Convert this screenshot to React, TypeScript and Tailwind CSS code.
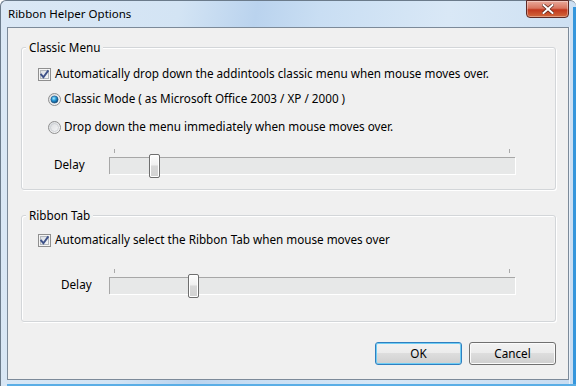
import React from "react";

function CheckBox() {
  return (
    <svg width="13" height="13" viewBox="0 0 13 13" className="shrink-0">
      <defs>
        <linearGradient id="cbg" x1="0" y1="0" x2="1" y2="1">
          <stop offset="0" stopColor="#d9dde2" />
          <stop offset="1" stopColor="#f7f8f9" />
        </linearGradient>
      </defs>
      <rect x="0.5" y="0.5" width="12" height="12" fill="#f5f5f5" stroke="#8f8f8f" />
      <rect x="2.5" y="2.5" width="8" height="8" fill="url(#cbg)" stroke="#b3b8bd" />
      <path d="M3.2 6.6 L5.4 9.2 L9.8 3.2" fill="none" stroke="#3e5289" strokeWidth="1.9" strokeLinecap="square" />
    </svg>
  );
}

function Radio({ checked }: { checked?: boolean }) {
  const id = checked ? "rsel" : "runsel";
  return (
    <svg width="13" height="13" viewBox="0 0 13 13" className="shrink-0">
      <defs>
        <linearGradient id={id + "o"} x1="0" y1="0" x2="1" y2="1">
          <stop offset="0" stopColor="#d6d9dc" />
          <stop offset="1" stopColor="#fbfbfb" />
        </linearGradient>
        <radialGradient id={id + "d"} cx="0.4" cy="0.35" r="0.7">
          <stop offset="0" stopColor="#a8ecff" />
          <stop offset="0.45" stopColor="#2596d6" />
          <stop offset="1" stopColor="#0c3f6a" />
        </radialGradient>
      </defs>
      <circle cx="6.5" cy="6.5" r="6" fill={`url(#${id}o)`} stroke="#8f8f8f" />
      {checked ? (
        <circle cx="6.5" cy="6.5" r="3.6" fill={`url(#${id}d)`} stroke="#1b4f80" strokeWidth="0.6" />
      ) : (
        <circle cx="6.5" cy="6.5" r="4" fill="none" stroke="#c9ccd0" strokeWidth="0.8" />
      )}
    </svg>
  );
}

function Slider({ label, labelPad, thumb }: { label: string; labelPad: string; thumb: number }) {
  return (
    <div className="flex h-[30px]">
      <div className={`w-[87px] shrink-0 flex items-center ${labelPad} pt-[4px]`}>{label}</div>
      <div className="flex flex-col w-[406px]">
        <div className="h-[9px] relative">
          <div className="absolute left-[5px] top-[1px] w-px h-[4px] bg-[#a9a9a9]" />
          <div className="absolute left-[400px] top-[1px] w-px h-[4px] bg-[#a9a9a9]" />
        </div>
        <div className="relative h-[17px] bg-[#e7e8e8] border-t border-l border-[#a7a7a7] shadow-[1px_1px_0_#ffffff]">
          <div
            className="absolute top-[-4px] w-[11px] h-[24px] rounded-[2px] border border-[#6e6e6e] bg-[linear-gradient(to_bottom,#fdfdfd_0%,#f0f0f0_45%,#d8d8d8_50%,#d2d2d2_100%)] shadow-[inset_0_0_0_1px_#ffffff]"
            style={{ left: thumb - 1 }}
          />
        </div>
      </div>
    </div>
  );
}

function Group({ title, children, className }: { title: string; children: React.ReactNode; className?: string }) {
  return (
    <div
      className={`ml-[13px] mr-[12px] border border-[#d3d6d9] rounded-[3px] shadow-[1px_1px_0_#ffffff,inset_1px_1px_0_#ffffff] ${className ?? ""}`}
    >
      <div className="-mt-[8px] ml-[4px] px-[3px] w-fit h-[15px] leading-[15px] bg-[#f0f0f0]">{title}</div>
      {children}
    </div>
  );
}

function Button({ children, def }: { children: React.ReactNode; def?: boolean }) {
  return (
    <div
      className={`w-[87px] h-[23px] rounded-[3px] border flex items-center justify-center bg-[linear-gradient(to_bottom,#f2f2f2_0%,#ebebeb_50%,#dddddd_50%,#cfcfcf_100%)] ${
        def
          ? "border-[#2f7fc0] shadow-[inset_0_0_0_1px_#6fcdf4]"
          : "border-[#707070] shadow-[inset_0_0_0_1px_#fbfbfb]"
      }`}
    >
      {children}
    </div>
  );
}

export default function App() {
  return (
    <div className="w-[576px] h-[386px] overflow-hidden bg-white font-['Noto_Sans',sans-serif] text-[11.7px] text-black">
      <div className="w-[576px] h-[386px] flex flex-col rounded-t-[6px] border-l border-t border-[#6b7b8b] bg-[linear-gradient(100deg,#dbe8f5_0%,#d3e4f4_28%,#bad3ee_40%,#c9def3_50%,#d9e8f6_70%,#c8dcf1_100%)] relative">
        <div className="h-[26px] flex items-start justify-between pl-[7px]">
          <div className="pt-[5px] text-[11.5px] leading-[16px] text-black">Ribbon Helper Options</div>
          <div className="mr-[7px] w-[43px] h-[18px] -mt-px rounded-b-[4px] border border-[#5e2a25] bg-[linear-gradient(to_bottom,#e9a99b_0%,#d9755f_45%,#c2381e_55%,#d2683c_100%)] flex items-center justify-center shadow-[inset_0_0_0_1px_rgba(255,255,255,0.35)]">
            <svg width="12" height="10" viewBox="0 0 12 10">
              <path d="M1.5 1 L10.5 9 M10.5 1 L1.5 9" stroke="#5b2318" strokeWidth="3.4" strokeLinecap="square" />
              <path d="M1.5 1 L10.5 9 M10.5 1 L1.5 9" stroke="#ffffff" strokeWidth="2" strokeLinecap="square" />
            </svg>
          </div>
        </div>
        <div className="flex flex-1 pl-[6px]">
          <div className="w-[562px] h-[353px] border border-[#7c8a99] bg-[#f0f0f0] flex flex-col">
            <Group title="Classic Menu" className="mt-[19px] pb-[11px]">
              <div className="mt-[11px] h-[16px] flex items-center pl-[16px] gap-[4px]">
                <CheckBox />
                <span>Automatically drop down the addintools classic menu when mouse moves over.</span>
              </div>
              <div className="mt-[9px] h-[16px] flex items-center pl-[26px] gap-[3px]">
                <Radio checked />
                <span>Classic Mode ( as Microsoft Office 2003 / XP / 2000 )</span>
              </div>
              <div className="mt-[12px] h-[16px] flex items-center pl-[26px] gap-[3px]">
                <Radio />
                <span>Drop down the menu immediately when mouse moves over.</span>
              </div>
              <div className="mt-[13px]">
                <Slider label="Delay" labelPad="pl-[32px]" thumb={40} />
              </div>
            </Group>
            <Group title="Ribbon Tab" className="mt-[25px] pb-[23px]">
              <div className="mt-[9px] h-[16px] flex items-center pl-[16px] gap-[4px]">
                <CheckBox />
                <span>Automatically select the Ribbon Tab when mouse moves over</span>
              </div>
              <div className="mt-[20px]">
                <Slider label="Delay" labelPad="pl-[39px]" thumb={79} />
              </div>
            </Group>
            <div className="mt-[20px] mr-[12px] flex justify-end gap-[7px]">
              <Button def>OK</Button>
              <Button>Cancel</Button>
            </div>
          </div>
          <div className="w-[7px] h-full border-l border-[#e8f1fa]" />
        </div>
        <div className="absolute right-0 top-[6px] bottom-0 w-[3px] bg-[#3596dc]" />
        <div className="absolute left-[6px] right-0 bottom-0 h-[2px] bg-[#5aaee6]" />
      </div>
    </div>
  );
}
